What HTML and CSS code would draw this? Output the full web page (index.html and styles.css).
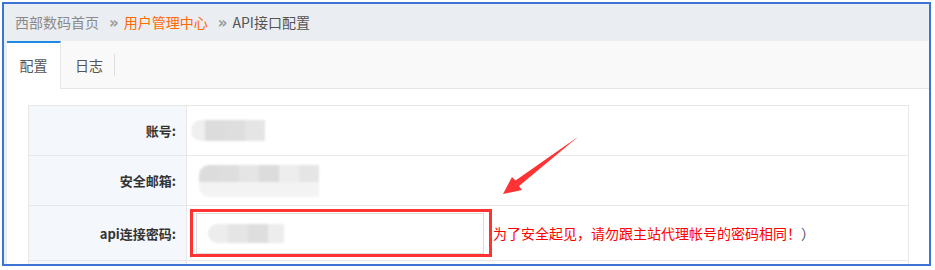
FILE: index.html
```html
<!DOCTYPE html>
<html lang="zh-CN">
<head>
<meta charset="utf-8">
<title>API接口配置</title>
<link rel="stylesheet" href="styles.css">
</head>
<body>
<div class="frame">
  <div class="crumb">
    <a class="crumb-home">西部数码首页</a><span class="sep">»</span><a class="crumb-link">用户管理中心</a><span class="sep">»</span><span class="crumb-cur">API接口配置</span>
  </div>
  <div class="panel">
    <div class="tabs">
      <div class="tab active">配置</div>
      <div class="tab">日志</div>
      <div class="tab-divider"></div>
    </div>
    <div class="content">
      <table class="form">
        <tr class="row">
          <td class="label">账号:</td>
          <td class="value">
            <div class="blur blur-1">
              <i class="b b-lt"></i><i class="b b-d1"></i><i class="b b-d2"></i><i class="b b-d3"></i>
            </div>
          </td>
        </tr>
        <tr class="row">
          <td class="label">安全邮箱:</td>
          <td class="value">
            <div class="blur blur-2">
              <div class="blur-line">
                <i class="b b-d1"></i><i class="b b-d2"></i><i class="b b-d3"></i><i class="b b-d1"></i><i class="b b-lt"></i><i class="b b-d3"></i>
              </div>
              <div class="blur-line light">
                <i class="b"></i><i class="b"></i><i class="b"></i><i class="b"></i><i class="b"></i><i class="b"></i>
              </div>
            </div>
          </td>
        </tr>
        <tr class="row row-tall">
          <td class="label">api连接密码:</td>
          <td class="value">
            <div class="pw-line">
              <span class="mark-box">
                <span class="pw-input">
                  <span class="blur blur-3"><i class="b b-lt"></i><i class="b b-d3"></i><i class="b b-d2"></i><i class="b b-lt"></i></span>
                </span>
              </span>
              <span class="warn">为了安全起见，请勿跟主站代理帐号的密码相同！<span class="warn-end">）</span></span>
            </div>
          </td>
        </tr>
        <tr class="row">
          <td class="label"></td>
          <td class="value"></td>
        </tr>
      </table>
    </div>
  </div>
</div>
<svg class="arrow" width="935" height="270" viewBox="0 0 935 270" aria-hidden="true">
  <polygon points="503,194 512,177 515.5,180.5 578.5,136.5 519,186 522,190" fill="#ff3333"/>
</svg>
</body>
</html>
```

FILE: styles.css
```css
* { box-sizing: border-box; }

html, body {
  margin: 0;
  padding: 0;
  background: #ffffff;
  font-family: "Noto Sans CJK SC", "Noto Sans", "Liberation Sans", sans-serif;
}

.frame {
  margin: 2px 0 0 2px;
  width: 929px;
  height: 264px;
  border: 2px solid #3d74d4;
  background: #eaedf2;
  display: flex;
  flex-direction: column;
  overflow: hidden;
}

.crumb {
  height: 37px;
  line-height: 36px;
  padding-left: 11px;
  font-size: 14px;
  color: #8a8a8a;
  white-space: nowrap;
  flex: none;
}
.crumb-home { color: #8a8a8a; }
.crumb-link { color: #ff6a00; }
.crumb-cur { color: #555555; }
.sep {
  color: #9a9a9a;
  font-size: 15px;
  font-weight: bold;
  font-family: "DejaVu Sans", sans-serif;
  margin: 0 5px 0 10px;
}

.panel {
  margin-left: 3px;
  flex: 1;
  background: #ffffff;
  display: flex;
  flex-direction: column;
}

.tabs {
  height: 48px;
  background: #f9f9f9;
  border-bottom: 1px solid #e6e6e6;
  display: flex;
  align-items: flex-start;
  flex: none;
}
.tab {
  height: 47px;
  line-height: 45px;
  padding: 0 11px 0 14px;
  font-size: 14px;
  color: #555555;
  border-top: 2px solid transparent;
}
.tab.active {
  height: 48px;
  width: 54px;
  padding: 0;
  text-align: center;
  background: #ffffff;
  border-top-color: #1e88e5;
  border-right: 1px solid #e6e6e6;
}
.tab-divider {
  width: 1px;
  height: 22px;
  margin-top: 13px;
  background: #dddddd;
}

.content {
  padding: 16px 20px 0 21px;
}

.form {
  width: 881px;
  border-collapse: collapse;
  border: 1px solid #e8e8e8;
}
.row { height: 50px; }
.row-tall { height: 55px; }
.row td {
  border-top: 1px solid #e8e8e8;
  border-bottom: 1px solid #e8e8e8;
  padding: 0;
  vertical-align: middle;
}
.label {
  width: 158px;
  background: #f4f7fb;
  border-right: 1px solid #e8e8e8;
  text-align: right;
  padding-right: 10px !important;
  font-size: 13px;
  font-weight: bold;
  color: #333333;
  white-space: nowrap;
}
.value {
  padding-left: 3px !important;
}

.blur {
  display: flex;
  filter: blur(0.9px);
}
.b {
  display: block;
  width: 20px;
  height: 100%;
}
.b-lt { background: #ededed; }
.b-d1 { background: #dcdcdc; }
.b-d2 { background: #dedede; }
.b-d3 { background: #e5e5e5; }

.blur-1 {
  height: 21px;
  margin-left: 1px;
}
.blur-1 .b-lt {
  width: 14px;
  border-radius: 10px 0 0 10px;
  background: #efefef;
}

.blur-2 {
  flex-direction: column;
  margin-left: 9px;
  width: 128px;
}
.blur-line {
  display: flex;
  height: 17px;
}
.blur-line .b { height: 17px; }
.blur-line:first-child .b:first-child { border-top-left-radius: 10px; }
.blur-line.light .b { background: #f3f3f3; height: 15px; }
.blur-line.light .b:first-child { border-bottom-left-radius: 10px; }
.blur-line.light { height: 15px; }

.pw-line {
  display: flex;
  align-items: center;
}
.mark-box {
  display: block;
  width: 302px;
  height: 48px;
  border: 3px solid #ff3333;
  padding: 1px 5px 0 3px;
}
.pw-input {
  display: flex;
  align-items: center;
  width: 288px;
  height: 41px;
  border: 1px solid #dddddd;
  background: #ffffff;
  padding-left: 11px;
}
.blur-3 {
  height: 19px;
}
.blur-3 .b:first-child {
  border-radius: 10px 0 0 10px;
}
.blur-3 .b:last-child { width: 16px; }

.warn {
  font-size: 14px;
  color: #ff0000;
  margin-left: 1px;
  white-space: nowrap;
}
.warn-end { color: #4a4a6a; }

.arrow {
  position: absolute;
  left: 0;
  top: 0;
  pointer-events: none;
}
```
